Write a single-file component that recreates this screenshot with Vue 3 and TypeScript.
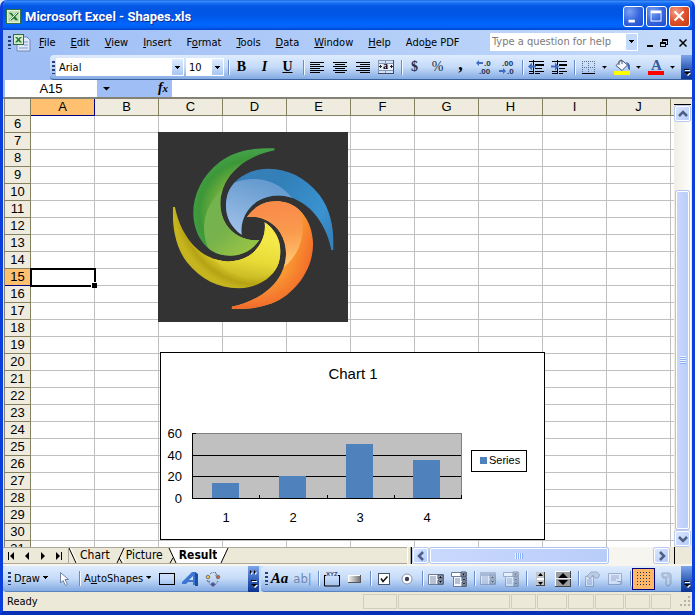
<script setup lang="ts">
import { ref } from 'vue'

interface MenuItem { before: string; key: string; after: string }

const menus: MenuItem[] = [
  { before: '', key: 'F', after: 'ile' },
  { before: '', key: 'E', after: 'dit' },
  { before: '', key: 'V', after: 'iew' },
  { before: '', key: 'I', after: 'nsert' },
  { before: 'F', key: 'o', after: 'rmat' },
  { before: '', key: 'T', after: 'ools' },
  { before: '', key: 'D', after: 'ata' },
  { before: '', key: 'W', after: 'indow' },
  { before: '', key: 'H', after: 'elp' },
  { before: 'Ado', key: 'b', after: 'e PDF' },
]

const columns = 'ABCDEFGHIJ'.split('')
const rows = Array.from({ length: 26 }, (_, i) => i + 6)
const activeColumn = ref('A')
const activeRow = ref(15)
function select(column: string, row: number) {
  activeColumn.value = column
  activeRow.value = row
}

const font = ref('Arial')
const size = ref('10')
const question = ref('')
const formula = ref('')

const aligns = [
  { name: 'Align Left', x: [1, 1, 1, 1, 1, 1] },
  { name: 'Center', x: [1, 3, 1, 3, 1, 3] },
  { name: 'Align Right', x: [1, 5, 1, 5, 1, 5] },
]
const alignWidths = [14, 10, 14, 10, 14, 10]

const values = [14, 20, 50, 35]
const bars = values.map((value, i) => {
  const height = Math.round((value * 65) / 60)
  return { label: i + 1, x: 52 + i * 67, y: 146 - height, height }
})
const axis = [
  { value: 60, y: 81 },
  { value: 40, y: 103 },
  { value: 20, y: 124 },
  { value: 0, y: 146 },
]

const blade =
  'M374 70 C318 67 255 76 208 112 C155 154 128 212 130 270 C133 330 165 373 206 387 C255 401 300 386 328 345 C290 350 250 332 228 298 C206 261 205 215 226 175 C252 124 310 88 374 76 Z'
const blades = [
  { name: 'green', turn: 0 },
  { name: 'blue', turn: 90 },
  { name: 'orange', turn: 180 },
  { name: 'yellow', turn: 270 },
]

const panes = [34, 112, 25, 30, 26, 29, 25, 20]
</script>

<template>
  <div class="window">
    <header class="title">
      <svg class="app-icon" viewBox="0 0 16 16" aria-hidden="true">
        <rect x="0.5" y="0.5" width="15" height="15" fill="#e9f2df" stroke="#2f6d3a" />
        <rect x="2" y="2" width="12" height="12" fill="#c4dfb9" />
        <path d="M3 4h3l2 3 3-3h3l-4 4 3 4h-3l-2-2-2 2H3l4-4z" fill="#1f7a35" />
        <path d="M4 12l8-8" stroke="#fff" />
      </svg>
      <h1>Microsoft Excel - Shapes.xls</h1>
      <button class="caption" aria-label="Minimize"><svg viewBox="0 0 21 21"><path d="M5 14h7v3H5z" fill="#fff" /></svg></button>
      <button class="caption" aria-label="Maximize"><svg viewBox="0 0 21 21"><path d="M4 4h12v12H4zM5 7v8h10V7z" fill="#fff" fill-rule="evenodd" /></svg></button>
      <button class="caption close" aria-label="Close"><svg viewBox="0 0 21 21"><path d="M5 5l10 10M15 5L5 15" stroke="#fff" stroke-width="2.2" /></svg></button>
    </header>

    <nav class="menu" aria-label="Menu">
      <i class="grip"></i>
      <svg class="doc-icon" viewBox="0 0 18 18" aria-hidden="true">
        <path d="M4 3h10l3 3v11H4z" fill="#dfe8fa" stroke="#7288b5" />
        <path d="M6 14h9M11 8h4M11 11h4" stroke="#7f9bd0" />
        <rect x="0.5" y="0.5" width="10" height="10" fill="#d8ebcf" stroke="#2f6d3a" />
        <path d="M2 3h2l1.500 1.500L7 3h2L6.500 5.500 9 8.500H7L5.500 7 4 8.500H2l2.500-3z" fill="#1f7a35" />
      </svg>
      <button v-for="m in menus" :key="m.key + m.after" class="menu-item">{{ m.before }}<u>{{ m.key }}</u>{{ m.after }}</button>
      <div class="ask">
        <input v-model="question" aria-label="Type a question for help" placeholder="Type a question for help" />
        <button aria-label="Show questions"><b class="caret"></b></button>
      </div>
      <button class="mdi" aria-label="Minimize workbook"><svg viewBox="0 0 10 10"><path d="M2 7h6v2H2z" /></svg></button>
      <button class="mdi" aria-label="Restore workbook"><svg viewBox="0 0 10 10"><path d="M3 1h6v6H7V9H1V4h2zM4 3v1h3v2h1V3zM2 6v2h4V6z" fill-rule="evenodd" /></svg></button>
      <button class="mdi last" aria-label="Close workbook"><svg viewBox="0 0 10 10"><path d="M1.500 1.500l7 7M8.500 1.500l-7 7" stroke="#000" stroke-width="1.500" /></svg></button>
    </nav>

    <div class="format-row">
      <div class="toolbar format" role="toolbar" aria-label="Formatting">
        <i class="grip"></i>
        <label class="combo font"><select v-model="font" aria-label="Font"><option>Arial</option><option>Tahoma</option></select><span><b class="caret"></b></span></label>
        <label class="combo size"><select v-model="size" aria-label="Font size"><option>10</option><option>12</option></select><span><b class="caret"></b></span></label>
        <i class="sep"></i>
        <button class="tool serif bold">B</button>
        <button class="tool serif bold italic">I</button>
        <button class="tool serif bold underline">U</button>
        <i class="sep"></i>
        <button v-for="a in aligns" :key="a.name" class="tool" :aria-label="a.name">
          <svg viewBox="0 0 16 16" shape-rendering="crispEdges">
            <rect v-for="(w, n) in alignWidths" :key="n" :x="a.x[n]" :y="3 + n * 2" :width="w" height="1" />
          </svg>
        </button>
        <button class="tool" aria-label="Merge and Center">
          <svg viewBox="0 0 16 16" shape-rendering="crispEdges">
            <path d="M0 1h16v14H0z" fill="#8796b3" /><path d="M15 1h1v14H0v-1h15z" fill="#3c4a68" /><path d="M1 2h6v2H1zM8 2h7v2H8zM1 12h6v2H1zM8 12h7v2H8z" fill="#d3e2f8" />
            <path d="M1 5h14v6H1z" fill="#e8effb" />
            <path d="M1 7.500h3M12 7.500h3M2.500 6v3M13.500 6v3" stroke="#222" />
            <text x="5" y="10" font-size="10" font-weight="bold" font-family="Liberation Serif, serif">a</text>
          </svg>
        </button>
        <i class="sep"></i>
        <button class="tool serif bold dim">$</button>
        <button class="tool serif dim">%</button>
        <button class="tool serif bold comma">,</button>
        <button class="tool" aria-label="Increase Decimal">
          <svg viewBox="0 0 16 16"><path d="M0 4l3-3v2h4v2H3v2z" fill="#3f6cc0" />
            <text x="8" y="7" class="decimal">.0</text><text x="3" y="15" class="decimal">.00</text></svg>
        </button>
        <button class="tool" aria-label="Decrease Decimal">
          <svg viewBox="0 0 16 16"><path d="M7 12L4 9v2H0v2h4v2z" fill="#3f6cc0" />
            <text x="3" y="7" class="decimal">.00</text><text x="8" y="15" class="decimal">.0</text></svg>
        </button>
        <i class="sep"></i>
        <button class="tool" aria-label="Decrease Indent">
          <svg viewBox="0 0 16 16"><path d="M1 2h15v1H1zM7 5h9v2H7zM7 9h7v1H7zM1 12h4v1H1zM7 12h9v1H7zM1 14h4v1H1zM7 14h5v1H7zM5 1h1v14H5z" />
            <path d="M0 7.500l4-4v3h4v2H4v3z" fill="#3f6cc0" /></svg>
        </button>
        <button class="tool" aria-label="Increase Indent">
          <svg viewBox="0 0 16 16"><path d="M1 2h15v1H1zM8 5h8v2H8zM8 9h6v1H8zM1 12h5v1H1zM8 12h8v1H8zM1 14h5v1H1zM8 14h4v1H8zM6 1h1v14H6z" />
            <path d="M8 7.500l-4-4v3H0v2h4v3z" fill="#3f6cc0" /></svg>
        </button>
        <i class="sep"></i>
        <button class="tool" aria-label="Borders">
          <svg viewBox="0 0 16 16"><path d="M2.500 2v11M8.500 2v11M14.500 2v11M2 2.500h13M2 8.500h13" stroke="#5d6d8c" stroke-dasharray="1 1" /><path d="M2 14h13v1H2z" /></svg>
        </button>
        <button class="drop" aria-label="Border choices"><b class="caret"></b></button>
        <button class="tool" aria-label="Fill Color">
          <svg viewBox="0 0 16 16"><path d="M2 6.500L7.500 1l6 5-5.500 5.500z" fill="#f6f9ff" stroke="#44546f" /><path d="M5 6V2.500Q6 0 8 2v3" fill="none" stroke="#44546f" />
            <path d="M12 3q5 1 4 8-3-1-2.500-5z" fill="#3f6cc0" /><path d="M0 12h16v4H0z" fill="#ff0" /></svg>
        </button>
        <button class="drop" aria-label="Fill choices"><b class="caret"></b></button>
        <button class="tool" aria-label="Font Color">
          <svg viewBox="0 0 16 16"><text x="3" y="11" font-size="15" font-weight="bold" fill="#355a9c" font-family="Liberation Serif, serif">A</text><path d="M0 12h16v4H0z" fill="#f00" /></svg>
        </button>
        <button class="drop" aria-label="Font color choices"><b class="caret"></b></button>
        <button class="endcap" aria-label="Toolbar Options"><svg viewBox="0 0 10 26"><path d="M3 16h5v1H3zM3 19h6l-3 3z" fill="#fff" /><path d="M2 15h5v1H2zM2 18h6l-3 3z" /></svg></button>
      </div>
    </div>

    <div class="formula">
      <input class="name-box" aria-label="Name Box" :value="activeColumn + activeRow" />
      <button class="name-drop" aria-label="Names"><b class="caret wide"></b></button>
      <button class="fx" aria-label="Insert Function">f<small>x</small></button>
      <input v-model="formula" class="formula-input" aria-label="Formula" />
    </div>

    <main class="sheet">
      <div class="canvas">
        <table>
          <colgroup><col class="head-col" /><col v-for="c in columns" :key="c" /><col /></colgroup>
          <thead>
            <tr>
              <th></th>
              <th v-for="c in columns" :key="c" :class="{ active: c === activeColumn }">{{ c }}</th>
              <th></th>
            </tr>
          </thead>
          <tbody>
            <tr v-for="r in rows" :key="r">
              <th :class="{ active: r === activeRow }">{{ r }}</th>
              <td v-for="c in columns" :key="c" :class="{ selected: c === activeColumn && r === activeRow }" @click="select(c, r)"></td>
              <td></td>
            </tr>
          </tbody>
        </table>

        <svg class="picture" viewBox="24 21 570 570" role="img" aria-label="Four coloured blades">
          <defs>
            <radialGradient id="green" gradientUnits="userSpaceOnUse" cx="300" cy="260" r="180">
              <stop offset="0.3" stop-color="#9cc845" /><stop offset="0.6" stop-color="#6fad3c" /><stop offset="0.85" stop-color="#3c9738" /><stop offset="1" stop-color="#43a047" />
            </radialGradient>
            <linearGradient id="blue" gradientUnits="userSpaceOnUse" x1="240" y1="140" x2="540" y2="350">
              <stop offset="0" stop-color="#3a7fb8" /><stop offset="0.4" stop-color="#3280b8" /><stop offset="0.8" stop-color="#3a93d1" /><stop offset="1" stop-color="#3581ba" />
            </linearGradient>
            <linearGradient id="orange" gradientUnits="userSpaceOnUse" x1="350" y1="360" x2="490" y2="400">
              <stop offset="0.1" stop-color="#fdb64a" /><stop offset="0.55" stop-color="#f99531" /><stop offset="1" stop-color="#f26a2a" />
            </linearGradient>
            <linearGradient id="orange-tail" gradientUnits="userSpaceOnUse" x1="0" y1="440" x2="0" y2="550">
              <stop offset="0" stop-color="#f26a2a" stop-opacity="0" /><stop offset="1" stop-color="#f26a2a" />
            </linearGradient>
            <radialGradient id="yellow" gradientUnits="userSpaceOnUse" cx="325" cy="245" r="254">
              <stop offset="0.6" stop-color="#ecdf37" /><stop offset="0.8" stop-color="#d8c92a" /><stop offset="0.92" stop-color="#b5a314" /><stop offset="1" stop-color="#c6b51e" />
            </radialGradient>
            <linearGradient id="green-light" gradientUnits="userSpaceOnUse" x1="170" y1="230" x2="300" y2="380">
              <stop offset="0" stop-color="#73b450" /><stop offset="0.5" stop-color="#77b24c" /><stop offset="1" stop-color="#9ac544" />
            </linearGradient>
            <linearGradient id="blue-light" gradientUnits="userSpaceOnUse" x1="300" y1="165" x2="250" y2="320">
              <stop offset="0" stop-color="#679cd0" /><stop offset="1" stop-color="#a0c1e8" />
            </linearGradient>
            <linearGradient id="orange-light" gradientUnits="userSpaceOnUse" x1="400" y1="240" x2="420" y2="410">
              <stop offset="0" stop-color="#f98b4b" /><stop offset="0.5" stop-color="#fa9b4d" /><stop offset="1" stop-color="#ffc470" />
            </linearGradient>
            <linearGradient id="yellow-light" gradientUnits="userSpaceOnUse" x1="320" y1="340" x2="300" y2="455">
              <stop offset="0" stop-color="#f5e94a" /><stop offset="0.6" stop-color="#e7da36" /><stop offset="1" stop-color="#cebe28" />
            </linearGradient>
            <clipPath id="disc"><circle cx="310" cy="310" r="148" /></clipPath>
            <clipPath v-for="b in blades" :id="'clip-' + b.name" :key="b.name"><path :d="blade" :transform="`rotate(${b.turn} 309.5 310.5)`" /></clipPath>
          </defs>
          <rect x="24" y="21" width="570" height="570" fill="#333" />
          <g v-for="b in blades" :key="b.name" :clip-path="`url(#clip-${b.name})`">
            <rect x="24" y="21" width="570" height="570" :fill="`url(#${b.name})`" />
            <rect v-if="b.name === 'orange'" x="24" y="21" width="570" height="570" fill="url(#orange-tail)" />
            <g clip-path="url(#disc)"><rect x="24" y="21" width="570" height="570" :fill="`url(#${b.name}-light)`" /></g>
          </g>
        </svg>

        <svg class="chart" viewBox="0 0 385 188" role="img" aria-label="Chart 1">
          <rect x="0.5" y="0.5" width="384" height="187" fill="#fff" stroke="#000" />
          <text x="193" y="27" font-size="15" text-anchor="middle">Chart 1</text>
          <g shape-rendering="crispEdges">
            <rect x="32" y="81" width="270" height="66" fill="#808080" />
            <rect x="32" y="82" width="269" height="65" fill="#c0c0c0" />
            <path d="M32 81h1v66h-1zM32 103h269v1H32zM32 124h269v1H32z" />
            <rect v-for="b in bars" :key="b.label" :x="b.x" :y="b.y" width="27" :height="b.height" fill="#4f81bd" />
            <path d="M32 81h4v1h-4zM32 146h270v1H32zM99 143h1v4h-1zM167 143h1v4h-1zM234 143h1v4h-1zM301 143h1v4h-1z" />
            <rect x="311.500" y="98.500" width="55" height="21" fill="#fff" stroke="#000" />
            <rect x="320" y="105" width="7" height="7" fill="#4f81bd" />
          </g>
          <text v-for="a in axis" :key="a.value" x="22" :y="a.y + 5" font-size="13" text-anchor="end">{{ a.value }}</text>
          <text v-for="b in bars" :key="b.label" :x="b.x + 14" y="170" font-size="13" text-anchor="middle">{{ b.label }}</text>
          <text x="329" y="112" font-size="11">Series</text>
        </svg>
      </div>

      <div class="vscroll">
        <i class="split"></i>
        <button class="scroll-button" aria-label="Scroll up"><svg viewBox="0 0 10 10"><path d="M1 7l4-4 4 4" /></svg></button>
        <i class="lead"></i>
        <i class="thumb"><em></em></i>
        <button class="scroll-button" aria-label="Scroll down"><svg viewBox="0 0 10 10"><path d="M1 3l4 4 4-4" /></svg></button>
      </div>
    </main>

    <div class="tabs-row">
      <div class="tabs">
        <button class="nav" aria-label="First sheet"><svg viewBox="0 0 8 8"><path d="M1 0h1v8H1zM7 0v8L3 4z" /></svg></button>
        <button class="nav" aria-label="Previous sheet"><svg viewBox="0 0 8 8"><path d="M6 0v8L2 4z" /></svg></button>
        <button class="nav" aria-label="Next sheet"><svg viewBox="0 0 8 8"><path d="M2 0v8l4-4z" /></svg></button>
        <button class="nav" aria-label="Last sheet"><svg viewBox="0 0 8 8"><path d="M1 0v8l4-4zM6 0h1v8H6z" /></svg></button>
        <svg class="edge" viewBox="0 0 12 15"><path d="M1 0l7 15" stroke="#000" fill="none" /><path d="M0.500 0v15" stroke="#aca899" /><path d="M2.500 0l7 15" stroke="#fff" fill="none" /></svg>
        <button class="tab">Chart</button>
        <svg class="edge slash" viewBox="0 0 12 15"><path d="M3 15L10 0M5 10l3 5" stroke="#000" fill="none" /><path d="M6.500 9l4 6" stroke="#fff" fill="none" /></svg>
        <button class="tab">Picture</button>
        <svg class="edge slash" viewBox="0 0 12 15"><path d="M3 0h9v15H9z" fill="#fff" /><path d="M2 0l7 15M6 10l-3 5" stroke="#000" fill="none" /></svg>
        <button class="tab current">Result</button>
        <svg class="edge joined" viewBox="0 0 12 15"><path d="M0 0h11L4 15H0z" fill="#fff" /><path d="M4 15L11 0" stroke="#000" fill="none" /></svg>
      </div>
      <div class="hscroll">
        <i class="split"></i>
        <button class="scroll-button" aria-label="Scroll left"><svg viewBox="0 0 10 10"><path d="M7 1L3 5l4 4" /></svg></button>
        <i class="thumb"><em></em></i>
        <i class="rest"></i>
        <button class="scroll-button" aria-label="Scroll right"><svg viewBox="0 0 10 10"><path d="M3 1l4 4-4 4" /></svg></button>
        <i class="split end"></i>
      </div>
    </div>

    <div class="bottom-bars">
      <div class="toolbar drawing" role="toolbar" aria-label="Drawing">
        <i class="grip"></i>
        <button class="words">D<u>r</u>aw <b class="caret"></b></button>
        <button class="tool" aria-label="Select Objects"><svg viewBox="0 0 16 16"><path d="M4.500 1.500v10.500l2.500-2.500 2.500 5 2-1-2.500-5h3.500z" fill="#fff" stroke="#6f819f" /></svg></button>
        <i class="sep"></i>
        <button class="words">A<u>u</u>toShapes <b class="caret"></b></button>
        <button class="tool" aria-label="Rectangle"><svg viewBox="0 0 16 16"><rect x="0.500" y="2.500" width="15" height="11" fill="none" stroke="#000" /></svg></button>
        <button class="tool" aria-label="WordArt"><svg viewBox="0 0 16 16"><path d="M0 11L10 1h4v13h-3v-3H6l-2 2H0z" fill="#3c76d0" /><path d="M7 9l4-4v4z" fill="#cfe0fa" /><path d="M13 1l3 2v12h-3z" fill="#1c4fa8" /></svg></button>
        <button class="tool" aria-label="Diagram">
          <svg viewBox="0 0 16 16"><path d="M5 3q3-3 6 0M13 10l-3 4M3 10l3 4M10 1l2 2-2 2M2 9l1 2 2-1" fill="none" stroke="#62708a" stroke-dasharray="2 1" />
            <circle cx="3" cy="6" r="1.800" fill="#f1c232" stroke="#777" /><circle cx="13" cy="6" r="1.800" fill="#d0563e" stroke="#777" /><circle cx="8" cy="13.500" r="1.800" fill="#3742d4" stroke="#777" /></svg>
        </button>
        <button class="endcap" aria-label="Drawing Options"><svg viewBox="0 0 10 26"><path d="M2 5l2 2-2 2zM6 5l2 2-2 2zM3 15h5v1H3zM3 19h6l-3 3z" fill="#fff" /><path d="M1 4l2 2-2 2zM5 4l2 2-2 2zM2 14h5v1H2zM2 18h6l-3 3z" /></svg></button>
      </div>
      <div class="toolbar forms" role="toolbar" aria-label="Forms">
        <i class="grip"></i>
        <button class="tool serif bold italic aa">Aa</button>
        <button class="tool ab">ab|</button>
        <i class="sep"></i>
        <button class="tool" aria-label="Group Box"><svg viewBox="0 0 16 16"><path d="M0 4.500h2M14 4.500h2M0.500 4v11h15V4" stroke="#000" fill="none" /><text x="2" y="5" font-size="6" font-weight="bold" fill="#26427c" font-family="Liberation Sans, sans-serif">XYZ</text></svg></button>
        <button class="tool" aria-label="Button"><svg viewBox="0 0 16 16"><path d="M1 4h13v8H1z" fill="#555" /><path d="M1 4h12v7H1z" fill="#fff" /><path d="M2 5h11v6H2z" fill="url(#metal)" /><defs><linearGradient id="metal"><stop stop-color="#eee" /><stop offset="1" stop-color="#777" /></linearGradient></defs></svg></button>
        <i class="sep"></i>
        <button class="tool" aria-label="Check Box"><svg viewBox="0 0 16 16"><rect x="2.500" y="2.500" width="11" height="11" fill="#fff" stroke="#44546f" /><path d="M5 7.500l2 3 4.500-5" fill="none" stroke="#111" stroke-width="1.500" /></svg></button>
        <button class="tool" aria-label="Option Button"><svg viewBox="0 0 16 16"><circle cx="8" cy="8" r="5" fill="#fff" stroke="#8c93a8" /><circle cx="8" cy="8" r="2.200" fill="#35405c" /></svg></button>
        <template v-for="n in 2" :key="n">
          <i class="sep"></i>
          <button class="tool" :class="{ faded: n === 2 }" aria-label="List Box"><svg viewBox="0 0 16 16"><path d="M0.500 3.500h15v10H0.500z" fill="#f4f7fd" stroke="#6b7b99" /><path v-if="n === 2" d="M0 1h16v4H0z" fill="#8495b5" /><path d="M2 6h6M2 8h6M2 10h6M2 12h6" stroke="#7c8cab" /><path d="M10 4h5v4h-5zM10 9h5v4h-5z" fill="#a9b4c8" stroke="#44546f" /><path d="M11 7l1.500-2L14 7zM11 10l1.500 2 1.500-2z" /></svg></button>
          <button class="tool" :class="{ faded: n === 2 }" aria-label="Combo Box"><svg viewBox="0 0 16 16"><path d="M0.500 1.500h15v4H0.500z" fill="#fff" stroke="#6b7b99" /><path d="M2.500 5.500h13v10h-13z" fill="#f4f7fd" stroke="#6b7b99" /><path d="M4 8h5M4 10h5M4 12h5" stroke="#7c8cab" /><path d="M10 1h5v4h-5zM11 6h4v4h-4zM11 11h4v4h-4z" fill="#a9b4c8" stroke="#44546f" /><path d="M11 2.500l1.500 2 1.500-2zM12 9l1-2 1 2zM12 12l1 2 1-2z" /></svg></button>
        </template>
        <i class="sep"></i>
        <button class="tool" aria-label="Scroll Bar"><svg viewBox="0 0 16 16"><path d="M4 1h9v14H4z" fill="#c3c7cd" /><path d="M12 1h1v14H4v-1h8z" fill="#444" /><path d="M5 7h7v2H5z" fill="#fff" /><path d="M6 5l2.500-3L11 5zM6 11l2.500 3 2.500-3z" /></svg></button>
        <button class="tool" aria-label="Spinner"><svg viewBox="0 0 16 16"><path d="M0 0h16v16H0z" fill="#444" /><path d="M0 0h15v15H0z" fill="#fff" /><path d="M1 1h14v14H1z" fill="#9a9da2" /><path d="M3 7l5-5 5 5zM3 9l5 5 5-5z" /><path d="M0 7.500h16" stroke="#eee" /></svg></button>
        <i class="sep"></i>
        <button class="tool faded" aria-label="Control Properties"><svg viewBox="0 0 16 16"><path d="M1.500 5.500h8v10h-8z" fill="#edf2fc" stroke="#6d7c9d" /><path d="M3 9h5M3 11h5M3 13h5" stroke="#6d7c9d" /><path d="M3 5l4-4h6l3 3-2 3h-3L9 4 6 8z" fill="#a9b6d0" stroke="#6d7c9d" /></svg></button>
        <button class="tool faded" aria-label="Edit Code"><svg viewBox="0 0 16 16"><path d="M1.500 2.500h13v8l-2 3h-11z" fill="#edf2fc" stroke="#6d7c9d" /><path d="M4 5h8M4 7h8M4 9h5M3 13.500h11l1-3h-5" fill="none" stroke="#6d7c9d" /></svg></button>
        <i class="sep"></i>
        <button class="tool pressed" aria-label="Toggle Grid"><svg viewBox="0 0 16 16" shape-rendering="crispEdges"><template v-for="y in 5" :key="y"><rect v-for="x in 5" :key="x" :x="x * 3 - 2" :y="y * 3 - 2" width="1" height="1" fill="#26304a" /></template></svg></button>
        <button class="tool faded" aria-label="Run Dialog"><svg viewBox="0 0 16 16"><path d="M3 2h6q3 0 3 2v9l-2 2H8l-1-2V7H4q-2-2-1-5z" fill="#9fadc9" stroke="#6d7c9d" /><path d="M5 4h3M9 7v6" stroke="#f4f7fd" /></svg></button>
        <button class="endcap" aria-label="Forms Options"><svg viewBox="0 0 10 26"><path d="M3 16h5v1H3zM3 19h6l-3 3z" fill="#fff" /><path d="M2 15h5v1H2zM2 18h6l-3 3z" /></svg></button>
      </div>
    </div>

    <footer class="status">
      <span>Ready</span>
      <i v-for="(w, n) in panes" :key="n" class="pane" :style="{ width: w + 'px' }"></i>
      <svg class="resize" viewBox="0 0 12 12"><path d="M8 0h2v2H8zM4 4h2v2H4zM8 4h2v2H8zM0 8h2v2H0zM4 8h2v2H4zM8 8h2v2H8z" fill="#b8b4a2" /></svg>
    </footer>
  </div>
</template>

<style>
body {
  background: #dfe6f5;
}
</style>

<style scoped>
* {
  box-sizing: border-box;
}

.window {
  display: flex;
  flex-direction: column;
  height: 100vh;
  overflow: hidden;
  border: solid #0a3fdb;
  border-width: 0 3px 4px;
  border-bottom-color: #0831b8;
  border-radius: 7px 7px 0 0;
  background: #9ebef5;
  color: #000;
  font-family: 'DejaVu Sans Condensed', 'DejaVu Sans', sans-serif;
  font-size: 11px;
}

button,
input,
select {
  margin: 0;
  padding: 0;
  border: 0;
  border-radius: 0;
  background: none;
  color: inherit;
  font: inherit;
  outline: none;
}

button {
  display: flex;
  flex: none;
  align-items: center;
  justify-content: center;
}

svg {
  display: block;
  flex: none;
}

i {
  flex: none;
  font-style: normal;
}

.caret {
  width: 5px;
  height: 3px;
  background: #000;
  clip-path: polygon(0 0, 100% 0, 100% 34%, 80% 34%, 80% 67%, 60% 67%, 60% 100%, 40% 100%, 40% 67%, 20% 67%, 20% 34%, 0 34%);
}

.caret.wide {
  width: 8px;
  height: 4px;
  clip-path: polygon(0 0, 100% 0, 50% 100%);
}

/* Title bar */
.title {
  display: flex;
  flex: none;
  align-items: center;
  height: 30px;
  margin: 0 -3px;
  padding: 3px 5px 0 6px;
  gap: 2px;
  background: linear-gradient(#0a50d8 0, #3c93ff 1px, #1c70f4 3px, #0258e4 6px, #0055e5 15px, #0066ff 24px, #0062f5 27px, #0043cf 30px);
}

.app-icon {
  width: 15px;
  height: 15px;
}

h1 {
  flex: 1;
  margin: 0 0 0 2px;
  color: #fff;
  font-family: Roboto, sans-serif;
  font-size: 13px;
  font-weight: 700;
  line-height: 20px;
  text-shadow: 1px 1px #0b2e9c;
}

.caption {
  width: 21px;
  height: 21px;
  border: 1px solid #fff;
  border-radius: 3px;
  background: radial-gradient(circle at 30% 25%, #7ba2f2, #3666e0 50%, #1d4bd0);
}

.caption svg {
  width: 19px;
  height: 19px;
}

.caption.close {
  background: radial-gradient(circle at 30% 25%, #f0a289, #e0512b 50%, #c03a10);
}

/* Menu bar */
.menu {
  display: flex;
  flex: none;
  align-items: center;
  height: 25px;
  padding-left: 5px;
  background: linear-gradient(90deg, #9ebef5, #c4dafa);
}

.grip {
  width: 3px;
  height: 13px;
  background: repeating-linear-gradient(#27417d 0 2px, transparent 2px 4px);
}

.doc-icon {
  width: 18px;
  height: 18px;
  margin: 0 0 0 2px;
}

.menu-item {
  display: block;
  padding: 0 7px 0 8px;
  line-height: 20px;
}

.ask {
  display: flex;
  flex: none;
  width: 148px;
  height: 18px;
  margin: 0 7px 2px auto;
  border: 1px solid #fff;
  background: #fff;
}

.ask input {
  flex: 1;
  min-width: 0;
  padding-left: 1px;
}

.ask input::placeholder {
  color: #7b7b7b;
  opacity: 1;
}

.ask button {
  width: 11px;
  background: #c4dafa;
}

.mdi {
  width: 10px;
  height: 16px;
  margin-right: 4px;
}

.mdi svg {
  width: 10px;
  height: 10px;
}

.mdi:nth-last-child(2) {
  margin-right: 9px;
}

/* Toolbars */
.format-row {
  flex: none;
  padding-left: 47px;
}

.toolbar {
  display: flex;
  align-items: center;
  border-radius: 4px 0 0 4px;
  background: linear-gradient(#dfecfe, #c5dbf8 50%, #84abe3);
}

.format {
  height: 25px;
  padding-left: 2px;
  border-bottom: 1px solid #3b619c;
}

.combo {
  display: grid;
  flex: none;
  grid-template-columns: 1fr 11px;
  height: 18px;
  border: 1px solid #fff;
  background: #fff;
}

.combo select {
  grid-area: 1 / 1 / 2 / 3;
  min-width: 0;
  padding-left: 2px;
  appearance: none;
}

.combo span {
  display: flex;
  grid-area: 1 / 2;
  align-items: center;
  justify-content: center;
  padding-top: 1px;
  background: linear-gradient(#dfecfe, #a9c7f0);
  pointer-events: none;
}

.font {
  width: 128px;
  margin-left: 1px;
}

.size {
  width: 38px;
  margin-left: 2px;
}

.sep {
  width: 6px;
  height: 15px;
  background: linear-gradient(90deg, transparent 4px, #6a8ccb 4px 5px, #f1f9ff 5px);
}

.tool {
  width: 23px;
  height: 22px;
}

.tool svg {
  width: 16px;
  height: 16px;
}

.serif {
  font-family: 'Liberation Serif', serif;
  font-size: 14px;
}

.bold {
  font-weight: 700;
}

.italic {
  font-style: italic;
}

.underline {
  text-decoration: underline;
}

.dim {
  color: #26304a;
}

.comma {
  align-items: flex-start;
  font-size: 18px;
  line-height: 16px;
}

.decimal {
  fill: #26304a;
  font-family: 'Liberation Sans', sans-serif;
  font-size: 8px;
  font-weight: 700;
}

.drop {
  width: 11px;
  height: 21px;
}

.endcap {
  align-self: stretch;
  width: 11px;
  margin-left: auto;
  background: linear-gradient(#7da6eb, #2a57b3 60%, #0d3591);
}

.endcap svg {
  width: 10px;
  height: 26px;
}

/* Formula bar */
.formula {
  display: flex;
  flex: none;
  height: 17px;
  padding-left: 2px;
}

.name-box {
  width: 92px;
  background: #fff;
  font-family: 'Liberation Sans', sans-serif;
  font-size: 13px;
  text-align: center;
}

.name-drop {
  width: 19px;
}

.fx {
  align-items: baseline;
  width: 18px;
  margin-left: 38px;
  font-family: 'Liberation Serif', serif;
  font-size: 14px;
  font-style: italic;
  font-weight: 700;
  line-height: 16px;
}

.fx small {
  font-size: 11px;
}

.formula-input {
  flex: 1;
  min-width: 0;
  background: #fff;
  font-family: 'Liberation Sans', sans-serif;
  font-size: 13px;
}

/* Worksheet */
.sheet {
  display: flex;
  flex: 1;
  min-height: 0;
  padding-left: 1px;
  border-top: 2px solid #848274;
  background: #ece9d8;
}

.canvas {
  position: relative;
  flex: 1;
  min-width: 0;
  overflow: hidden;
  border-left: 1px solid #848274;
  background: #fff;
  font-family: 'Liberation Sans', sans-serif;
}

table {
  width: 730px;
  border-spacing: 0;
  table-layout: fixed;
}

col {
  width: 64px;
}

.head-col {
  width: 26px;
}

th,
td {
  height: 17px;
  padding: 0;
  border: solid #c0c0c0;
  border-width: 0 1px 1px 0;
}

th {
  border-color: #848261;
  background: #efebde;
  font-size: 13px;
  font-weight: 400;
  line-height: 16px;
}

th.active {
  border-color: #000084;
  background: #ffc070;
}

td.selected {
  position: relative;
  outline: 2px solid #000;
  outline-offset: -1px;
}

td.selected::after {
  position: absolute;
  right: -3px;
  bottom: -3px;
  width: 5px;
  height: 5px;
  border: solid #fff;
  border-width: 1px 0 0 1px;
  background: #000;
  content: '';
}

.picture {
  position: absolute;
  top: 33px;
  left: 153px;
  width: 190px;
  height: 190px;
}

.chart {
  position: absolute;
  top: 253px;
  left: 155px;
  width: 385px;
  height: 188px;
}

/* Scroll bars */
.vscroll {
  display: flex;
  flex: none;
  flex-direction: column;
  align-items: center;
  width: 18px;
  border-right: 1px solid #ece9d8;
  background: linear-gradient(90deg, #f0eee6, #fefefb);
}

.vscroll .split {
  width: 100%;
  height: 6px;
  border-bottom: 1px solid #000;
  background: #ece9d8;
}

.scroll-button {
  width: 15px;
  height: 15px;
  margin: 1px;
  border: 1px solid #fff;
  border-radius: 2px;
  background: linear-gradient(135deg, #dbe6ff, #b5cbfb);
  box-shadow: 0 0 0 1px #b8c9ef;
}

.scroll-button svg {
  width: 10px;
  height: 10px;
}

.scroll-button path {
  fill: none;
  stroke: #4d6185;
  stroke-width: 2.5;
}

.lead {
  flex: 69;
}

.thumb {
  display: flex;
  align-items: center;
  justify-content: center;
  border: 1px solid #fff;
  border-radius: 2px;
  background: linear-gradient(90deg, #c9d8fd, #b9cdfa);
  box-shadow: 0 0 0 1px #b0c4ee;
}

.vscroll .thumb {
  flex: 338;
  width: 13px;
  margin-bottom: 1px;
}

.vscroll .thumb em {
  width: 6px;
  height: 8px;
  background: repeating-linear-gradient(#eef4fe 0 1px, #8cb0f8 1px 2px);
}

/* Sheet tabs */
.tabs-row {
  display: grid;
  flex: none;
  grid-template-columns: 404fr 285fr;
  height: 19px;
  border-bottom: 2px solid #f7f5ee;
  background: #ece9d8;
}

.tabs {
  display: flex;
  align-items: stretch;
  min-width: 0;
  border-top: 1px solid #aca899;
  border-bottom: 1px solid #aca899;
}

.nav {
  width: 16px;
}

.nav svg {
  width: 8px;
  height: 8px;
}

.edge {
  width: 12px;
  height: 15px;
  margin-left: 1px;
}

.edge.slash {
  margin-left: 4px;
}

.edge.joined {
  margin-left: 0;
}

.tab {
  display: block;
  font-size: 12px;
  line-height: 15px;
}

.tab.current {
  background: #fff;
  font-weight: 700;
}

.hscroll {
  display: flex;
  align-items: stretch;
  min-width: 0;
  background: #f6f5f0;
}

.hscroll .split {
  width: 5px;
  border: solid #000;
  border-width: 0 1px 0 0;
  background: linear-gradient(90deg, #fff 1px, #ece9d8 1px 3px, #aca899 3px);
}

.hscroll .split.end {
  width: 22px;
  border-right: 0;
  background: linear-gradient(90deg, #ece9d8 4px, #000 4px 5px, #ece9d8 5px);
}

.hscroll .thumb {
  flex: 176;
  margin: 1px 0 1px 1px;
}

.hscroll .thumb em {
  width: 8px;
  height: 6px;
  background: repeating-linear-gradient(90deg, #eef4fe 0 1px, #8cb0f8 1px 2px);
}

.rest {
  flex: 45;
}

/* Bottom toolbars */
.bottom-bars {
  display: grid;
  flex: none;
  grid-template-columns: 256fr 431fr;
  height: 26px;
  gap: 2px;
  background: #c4dafa;
}

.bottom-bars .toolbar {
  min-width: 0;
  border-bottom: 1px solid #5b83c0;
}

.bottom-bars .endcap {
  margin-bottom: -1px;
}

.drawing {
  padding-left: 5px;
}

.forms {
  padding-left: 4px;
}

.words {
  display: block;
  padding: 0 4px 0 3px;
  white-space: nowrap;
}

.words .caret {
  display: inline-block;
  margin: 0 0 3px;
}

.aa {
  font-size: 15px;
}

.ab {
  color: #7286b2;
  font-size: 13px;
}

.faded {
  opacity: 0.5;
}

.pressed {
  border: 1px solid #000080;
  background: #ffb868;
}

/* Status bar */
.status {
  display: flex;
  flex: none;
  align-items: center;
  height: 19px;
  padding: 0 0 0 4px;
  gap: 1px;
  background: #ece9d8;
}

.status span {
  flex: 1;
}

.pane {
  height: 15px;
  border: 1px solid #d2cebf;
}

.resize {
  width: 12px;
  height: 12px;
  margin-left: 8px;
}
</style>
